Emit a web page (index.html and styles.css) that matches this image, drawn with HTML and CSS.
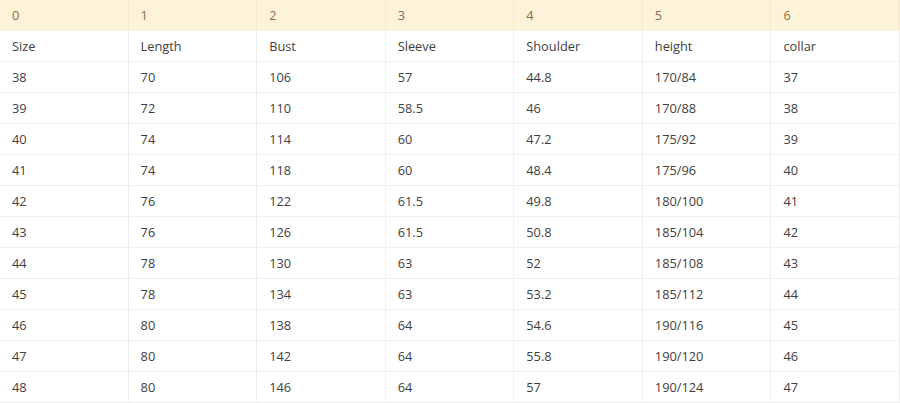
FILE: index.html
```html
<!DOCTYPE html>
<html>
<head>
<meta charset="utf-8">
<link rel="stylesheet" href="styles.css">
</head>
<body>
<table class="size-table">
<thead>
<tr><th>0</th><th>1</th><th>2</th><th>3</th><th>4</th><th>5</th><th>6</th></tr>
</thead>
<tbody>
<tr><td>Size</td><td>Length</td><td>Bust</td><td>Sleeve</td><td>Shoulder</td><td>height</td><td>collar</td></tr>
<tr><td>38</td><td>70</td><td>106</td><td>57</td><td>44.8</td><td>170/84</td><td>37</td></tr>
<tr><td>39</td><td>72</td><td>110</td><td>58.5</td><td>46</td><td>170/88</td><td>38</td></tr>
<tr><td>40</td><td>74</td><td>114</td><td>60</td><td>47.2</td><td>175/92</td><td>39</td></tr>
<tr><td>41</td><td>74</td><td>118</td><td>60</td><td>48.4</td><td>175/96</td><td>40</td></tr>
<tr><td>42</td><td>76</td><td>122</td><td>61.5</td><td>49.8</td><td>180/100</td><td>41</td></tr>
<tr><td>43</td><td>76</td><td>126</td><td>61.5</td><td>50.8</td><td>185/104</td><td>42</td></tr>
<tr><td>44</td><td>78</td><td>130</td><td>63</td><td>52</td><td>185/108</td><td>43</td></tr>
<tr><td>45</td><td>78</td><td>134</td><td>63</td><td>53.2</td><td>185/112</td><td>44</td></tr>
<tr><td>46</td><td>80</td><td>138</td><td>64</td><td>54.6</td><td>190/116</td><td>45</td></tr>
<tr><td>47</td><td>80</td><td>142</td><td>64</td><td>55.8</td><td>190/120</td><td>46</td></tr>
<tr><td>48</td><td>80</td><td>146</td><td>64</td><td>57</td><td>190/124</td><td>47</td></tr>
</tbody>
</table>
</body>
</html>
```
FILE: styles.css
```css
html, body {
  margin: 0;
  padding: 0;
  background: #fff;
}
.size-table {
  width: 900px;
  border-collapse: separate;
  border-spacing: 0;
  table-layout: fixed;
  font-family: "Open Sans", "Noto Sans", sans-serif;
  font-size: 12.8px;
  color: #3f3f3f;
}
.size-table th,
.size-table td {
  padding: 0 0 0 12px;
  text-align: left;
  font-weight: normal;
  border-right: 1px solid #efefef;
  border-bottom: 1px solid #efefef;
  box-sizing: border-box;
  height: 31px;
  vertical-align: middle;
}
.size-table th {
  background: #fdf3d8;
  color: #8c6d45;
  border-right-color: #f5ead0;
  border-bottom: 1px solid #fdf3d8;
}
```
